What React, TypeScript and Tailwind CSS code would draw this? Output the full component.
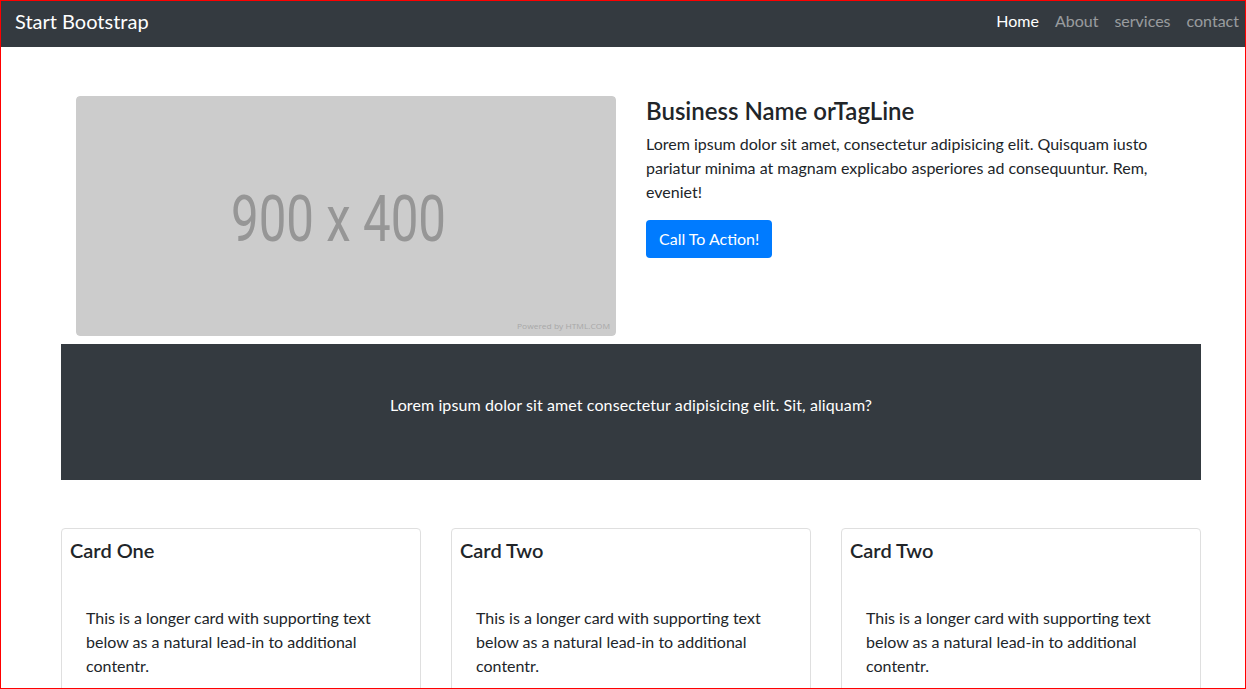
import React from "react";

const font = { fontFamily: "Lato, 'Noto Sans', sans-serif" };

function Placeholder() {
  return (
    <svg width="540" height="240" viewBox="0 0 540 240" className="block rounded-[4px]">
      <rect x="0" y="0" width="540" height="240" rx="4" fill="#cccccc" />
      <text
        x="155"
        y="145"
        fontFamily="Roboto, sans-serif"
        fontSize="64"
        fill="#969696"
        textLength="215"
        lengthAdjust="spacingAndGlyphs"
      >
        900 x 400
      </text>
      <text
        x="441"
        y="233"
        fontFamily="'Open Sans', sans-serif"
        fontSize="8"
        fill="#a8a8a8"
        textLength="93"
        lengthAdjust="spacingAndGlyphs"
      >
        Powered by HTML.COM
      </text>
    </svg>
  );
}

function Card({ title }: { title: string }) {
  return (
    <div className="border border-[#dfdfdf] rounded-[4px] bg-white h-[200px]">
      <h5 className="pl-[8px] pt-[9px] text-[20px] leading-[24px] font-semibold text-[#212529]">{title}</h5>
      <p className="pl-[24px] pr-[20px] pt-[44px] text-[16px] leading-[24px] text-[#212529]">
        This is a longer card with supporting text below as a natural lead-in to additional contentr.
      </p>
    </div>
  );
}

export default function App() {
  return (
    <div className="h-[689px] w-[1246px] overflow-hidden border border-[#ff0000] bg-white" style={font}>
      <nav className="h-[46px] bg-[#343a40] flex items-start justify-between pl-[14px] pt-[5px]">
        <span className="text-white text-[20px] leading-[30px]">Start Bootstrap</span>
        <ul className="flex items-center text-[16px] leading-[24px] pt-[3px]">
          <li className="px-[8px] text-white">Home</li>
          <li className="px-[8px] text-white/50">About</li>
          <li className="px-[8px] text-white/50">services</li>
          <li className="pl-[8px] pr-[6px] text-white/50">contact</li>
        </ul>
      </nav>
      <div className="ml-[60px] w-[1140px]">
        <div className="flex pt-[49px]">
          <div className="w-[570px] px-[15px]">
            <Placeholder />
          </div>
          <div className="w-[570px] px-[15px] text-[#212529]">
            <h1 className="text-[24px] leading-[28px] font-semibold mt-[1px]">Business Name orTagLine</h1>
            <p className="mt-[7px] text-[16px] leading-[24px]">
              Lorem ipsum dolor sit amet, consectetur adipisicing elit. Quisquam iusto pariatur minima at magnam
              explicabo asperiores ad consequuntur. Rem, eveniet!
            </p>
            <button className="mt-[16px] bg-[#007bff] text-white text-[16px] leading-[24px] px-[13px] py-[7px] rounded-[4px]">
              Call To Action!
            </button>
          </div>
        </div>
        <div className="mt-[8px] h-[136px] bg-[#343a40] flex items-center justify-center pb-[14px]">
          <p className="text-white text-[16px] leading-[24px] tracking-[0.1px]">
            Lorem ipsum dolor sit amet consectetur adipisicing elit. Sit, aliquam?
          </p>
        </div>
        <div className="mt-[48px] grid grid-cols-3 gap-[30px]">
          <Card title="Card One" />
          <Card title="Card Two" />
          <Card title="Card Two" />
        </div>
      </div>
    </div>
  );
}
